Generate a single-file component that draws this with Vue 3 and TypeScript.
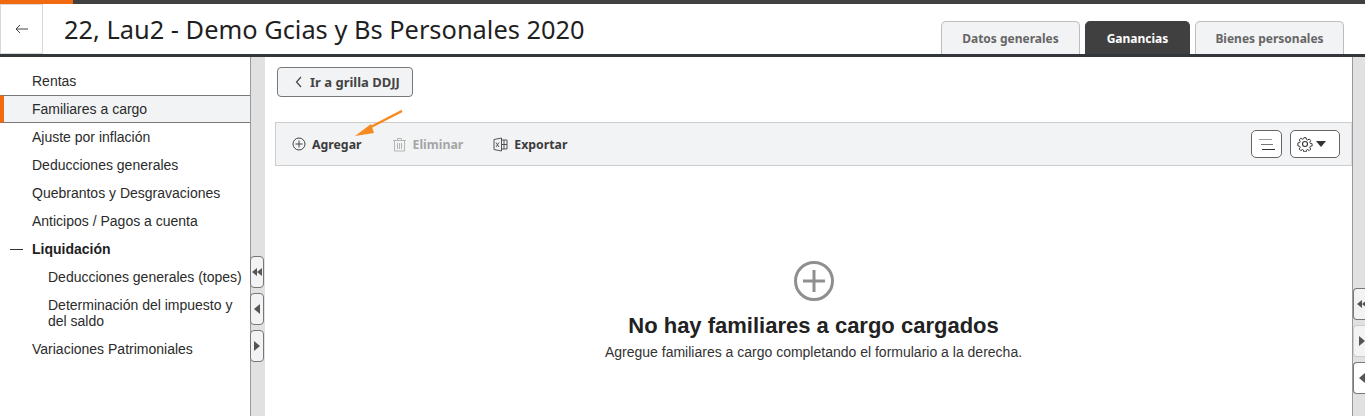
<script setup lang="ts">
const menu = [
  { label: 'Rentas' },
  { label: 'Familiares a cargo', active: true },
  { label: 'Ajuste por inflación' },
  { label: 'Deducciones generales' },
  { label: 'Quebrantos y Desgravaciones' },
  { label: 'Anticipos / Pagos a cuenta' },
]
const tabs = [
  { label: 'Datos generales', width: 139 },
  { label: 'Ganancias', width: 105, active: true },
  { label: 'Bienes personales', width: 149 },
]
</script>

<template>
  <div class="page">
    <div class="topbar"><div class="progress"></div></div>
    <header class="header">
      <button class="back">
        <svg width="13" height="10" viewBox="0 0 13 10" fill="none" stroke="#444" stroke-width="1">
          <path d="M13 5H1M5 1 1 5l4 4" />
        </svg>
      </button>
      <h1 class="title">22, Lau2 - Demo Gcias y Bs Personales 2020</h1>
      <nav class="tabs">
        <div
          v-for="t in tabs"
          :key="t.label"
          class="tab"
          :class="{ active: t.active }"
          :style="{ width: t.width + 'px' }"
        >{{ t.label }}</div>
      </nav>
    </header>

    <div class="body">
      <aside class="sidebar">
        <div v-for="m in menu" :key="m.label" class="item" :class="{ active: m.active }">{{ m.label }}</div>
        <div class="item group"><span class="dash"></span>Liquidación</div>
        <div class="item sub">Deducciones generales (topes)</div>
        <div class="item sub wrap">Determinación del impuesto y del saldo</div>
        <div class="item">Variaciones Patrimoniales</div>
      </aside>

      <div class="splitter">
        <button class="grip g1">
          <svg width="10" height="10" viewBox="0 0 10 10" fill="#555"><path d="M5 1v8L0 5zM10 1v8L5 5z" /></svg>
        </button>
        <button class="grip g2">
          <svg width="6" height="10" viewBox="0 0 6 10" fill="#555"><path d="M6 0v10L0 5z" /></svg>
        </button>
        <button class="grip g3">
          <svg width="6" height="10" viewBox="0 0 6 10" fill="#555"><path d="M0 0v10l6-5z" /></svg>
        </button>
      </div>

      <main class="main">
        <div class="back-row">
          <button class="grid-btn">
            <svg width="7" height="12" viewBox="0 0 7 12" fill="none" stroke="#444" stroke-width="1.2">
              <path d="M6 1 1.5 6 6 11" />
            </svg>
            Ir a grilla DDJJ
          </button>
        </div>

        <div class="toolbar">
          <div class="tool">
            <svg width="14" height="14" viewBox="0 0 14 14" fill="none" stroke="#444">
              <circle cx="7" cy="7" r="6" /><path d="M3.5 7h7M7 3.5v7" />
            </svg>
            Agregar
          </div>
          <div class="tool disabled">
            <svg width="15" height="15" viewBox="0 0 15 15" fill="none" stroke="#b5b5b5">
              <path d="M1 3.5h13M5.5 3.5V1.5h4v2M2.5 3.5v10.5h10V3.5M5.5 6v6M7.5 6v6M9.5 6v6" />
            </svg>
            Eliminar
          </div>
          <div class="tool">
            <svg width="15" height="15" viewBox="0 0 15 15" fill="none" stroke="#444">
              <path d="M1 2.5 8.5 1v13L1 12.5zM8.5 3H14v9H8.5M11 3v9M8.5 7.5H14" stroke-width="0.9" />
              <path d="m3 5.5 3 4.500M6 5.5l-3 4.500" stroke-width="0.9" />
            </svg>
            Exportar
          </div>
          <div class="tool-right">
            <button class="icon-btn small">
              <svg width="16" height="11" viewBox="0 0 16 11" fill="none">
                <path d="M0 .5h13" stroke="#999" />
                <path d="M2 5.500h12" stroke="#777" />
                <path d="M3 10.500h13" stroke="#333" />
              </svg>
            </button>
            <button class="icon-btn wide">
              <svg width="16" height="16" viewBox="0 0 16 16" fill="none" stroke="#333" stroke-width="1.1">
                <circle cx="8" cy="8" r="2.500" />
                <path d="M6.800 1h2.400l.4 2 1.300.6 1.800-1.100 1.700 1.700-1.100 1.800.6 1.300 2 .4v2.400l-2 .4-.6 1.300 1.100 1.800-1.700 1.700-1.800-1.100-1.300.6-.4 2H6.800l-.4-2-1.300-.6-1.800 1.100-1.700-1.700 1.100-1.800-.6-1.300-2-.4V6.800l2-.4.6-1.300-1.100-1.800 1.700-1.700 1.800 1.100 1.300-.6z" transform="translate(.8 .8) scale(.9)" />
              </svg>
              <span class="caret"></span>
            </button>
          </div>
        </div>

        <section class="empty">
          <svg width="42" height="42" viewBox="0 0 42 42" fill="none" stroke="#8f8f8f" stroke-width="3">
            <circle cx="21" cy="21" r="18.500" /><path d="M10 21h22M21 10v22" />
          </svg>
          <h2>No hay familiares a cargo cargados</h2>
          <p>Agregue familiares a cargo completando el formulario a la derecha.</p>
        </section>

        <svg class="arrow" width="50" height="28" viewBox="0 0 50 28">
          <path d="M48 1 13 19" stroke="#f68a1e" stroke-width="2.500" fill="none" />
          <path d="M1 26 17 14l3 9z" fill="#f68a1e" />
        </svg>
      </main>

      <div class="splitter right">
        <button class="grip r1">
          <svg width="10" height="10" viewBox="0 0 10 10" fill="#555"><path d="M5 1v8L0 5zM10 1v8L5 5z" /></svg>
        </button>
        <button class="grip r2">
          <svg width="6" height="10" viewBox="0 0 6 10" fill="#555"><path d="M0 0v10l6-5z" /></svg>
        </button>
        <button class="grip r3">
          <svg width="6" height="10" viewBox="0 0 6 10" fill="#555"><path d="M6 0v10L0 5z" /></svg>
        </button>
      </div>
    </div>
  </div>
</template>

<style>
html,
body {
  margin: 0;
  background: #fff;
  overflow: hidden;
}
</style>

<style scoped>
.page {
  width: 1365px;
  height: 416px;
  display: flex;
  flex-direction: column;
  overflow: hidden;
  font-family: "Liberation Sans", Arial, sans-serif;
  color: #222;
}

.topbar {
  height: 4px;
  background: #404040;
  flex: none;
}

.progress {
  width: 73px;
  height: 4px;
  background: #f26a0f;
}

.header {
  height: 50px;
  flex: none;
  display: flex;
  align-items: stretch;
  border-bottom: 3px solid #33363b;
}

.back {
  width: 43px;
  margin-left: 0;
  padding: 0;
  background: #fff;
  border: 1px solid #d9d9d9;
  display: flex;
  align-items: center;
  justify-content: center;
}

.title {
  margin: 0 0 0 21px;
  font-family: "Noto Sans", sans-serif;
  font-size: 25.4px;
  font-weight: 400;
  line-height: 50px;
  color: #1f1f1f;
  white-space: nowrap;
}

.tabs {
  margin-left: auto;
  margin-right: 21px;
  display: flex;
  align-items: flex-end;
  gap: 5px;
}

.tab {
  height: 33px;
  box-sizing: border-box;
  display: flex;
  align-items: center;
  justify-content: center;
  background: #f2f3f5;
  border: 1px solid #bdbdbd;
  border-bottom: 0;
  border-radius: 5px 5px 0 0;
  font-family: "Noto Sans", sans-serif;
  font-size: 12px;
  font-weight: 700;
  color: #666;
}

.tab.active {
  background: #404040;
  border-color: #404040;
  color: #fff;
}

.body {
  flex: 1;
  display: flex;
  min-height: 0;
}

.sidebar {
  width: 250px;
  flex: none;
  box-sizing: border-box;
  padding-top: 10px;
  font-size: 14px;
}

.item {
  box-sizing: border-box;
  min-height: 28px;
  padding: 0 0 0 32px;
  line-height: 28px;
  color: #2b2b2b;
  white-space: nowrap;
}

.item.active {
  height: 28px;
  line-height: 26px;
  padding-left: 28px;
  background: #f2f3f5;
  border-top: 1px solid #777;
  border-bottom: 1px solid #777;
  border-left: 4px solid #f26a0f;
}

.item.group {
  display: flex;
  align-items: center;
  font-weight: 700;
  color: #1f1f1f;
  padding-left: 10px;
}

.dash {
  width: 13px;
  height: 1px;
  margin-right: 9px;
  background: #333;
}

.item.sub {
  padding-left: 48px;
}

.item.wrap {
  white-space: normal;
  width: 240px;
  line-height: 16px;
  padding-top: 6px;
  padding-bottom: 6px;
  min-height: 44px;
}

.splitter {
  position: relative;
  width: 14px;
  flex: none;
  background: #e1e1e1;
  border-left: 1px solid #999;
}

.splitter.right {
  width: 13px;
  box-sizing: border-box;
}

.grip {
  position: absolute;
  left: -1px;
  width: 14px;
  height: 32px;
  padding: 0;
  display: flex;
  align-items: center;
  justify-content: center;
  background: #f2f3f5;
  border: 1px solid #777;
  border-radius: 4px;
}

.g1 { top: 199px; }
.g2 { top: 236px; }
.g3 { top: 273px; }

.r1, .r2, .r3 {
  left: 0;
  width: 16px;
  border-right: 0;
  border-radius: 4px 0 0 4px;
}

.r1 { top: 231px; }
.r2 { top: 268px; border-color: #ccc; }
.r3 { top: 305px; background: #fff; }

.main {
  position: relative;
  flex: 1;
  min-width: 0;
  display: flex;
  flex-direction: column;
  padding: 10px 0 0 10px;
}

.back-row {
  height: 55px;
  padding-left: 2px;
  flex: none;
}

.grid-btn {
  width: 136px;
  height: 30px;
  padding: 0 0 0 17px;
  display: flex;
  align-items: center;
  gap: 8px;
  background: #f2f3f5;
  border: 1px solid #777;
  border-radius: 4px;
  font-family: "Noto Sans", sans-serif;
  font-size: 13px;
  font-weight: 700;
  color: #444;
}

.toolbar {
  height: 44px;
  flex: none;
  box-sizing: border-box;
  display: flex;
  align-items: center;
  padding: 0 11px 0 16px;
  background: #f2f3f5;
  border: 1px solid #ccc;
  border-right-color: #ddd;
}

.tool {
  display: flex;
  align-items: center;
  gap: 6px;
  margin-right: 30px;
  font-family: "Noto Sans", sans-serif;
  font-size: 12.3px;
  font-weight: 700;
  color: #3c3c3c;
}

.tool.disabled {
  color: #a5a5a5;
}

.tool-right {
  margin-left: auto;
  display: flex;
  gap: 8px;
}

.icon-btn {
  height: 28px;
  padding: 0;
  display: flex;
  align-items: center;
  justify-content: center;
  gap: 3px;
  background: #fff;
  border: 1px solid #666;
  border-radius: 5px;
}

.icon-btn.small {
  width: 31px;
}

.icon-btn.wide {
  width: 50px;
  justify-content: flex-start;
  padding-left: 6px;
  box-sizing: border-box;
}

.caret {
  width: 0;
  height: 0;
  border-left: 5px solid transparent;
  border-right: 5px solid transparent;
  border-top: 6px solid #333;
}

.empty {
  display: flex;
  flex-direction: column;
  align-items: center;
  padding-top: 94px;
}

.empty h2 {
  margin: 9px 0 0;
  font-size: 22px;
  line-height: 30px;
  font-weight: 700;
  color: #222;
}

.empty p {
  margin: 3px 0 0;
  font-size: 14px;
  line-height: 16px;
  color: #333;
}

.arrow {
  position: absolute;
  left: 89px;
  top: 53px;
}
</style>
